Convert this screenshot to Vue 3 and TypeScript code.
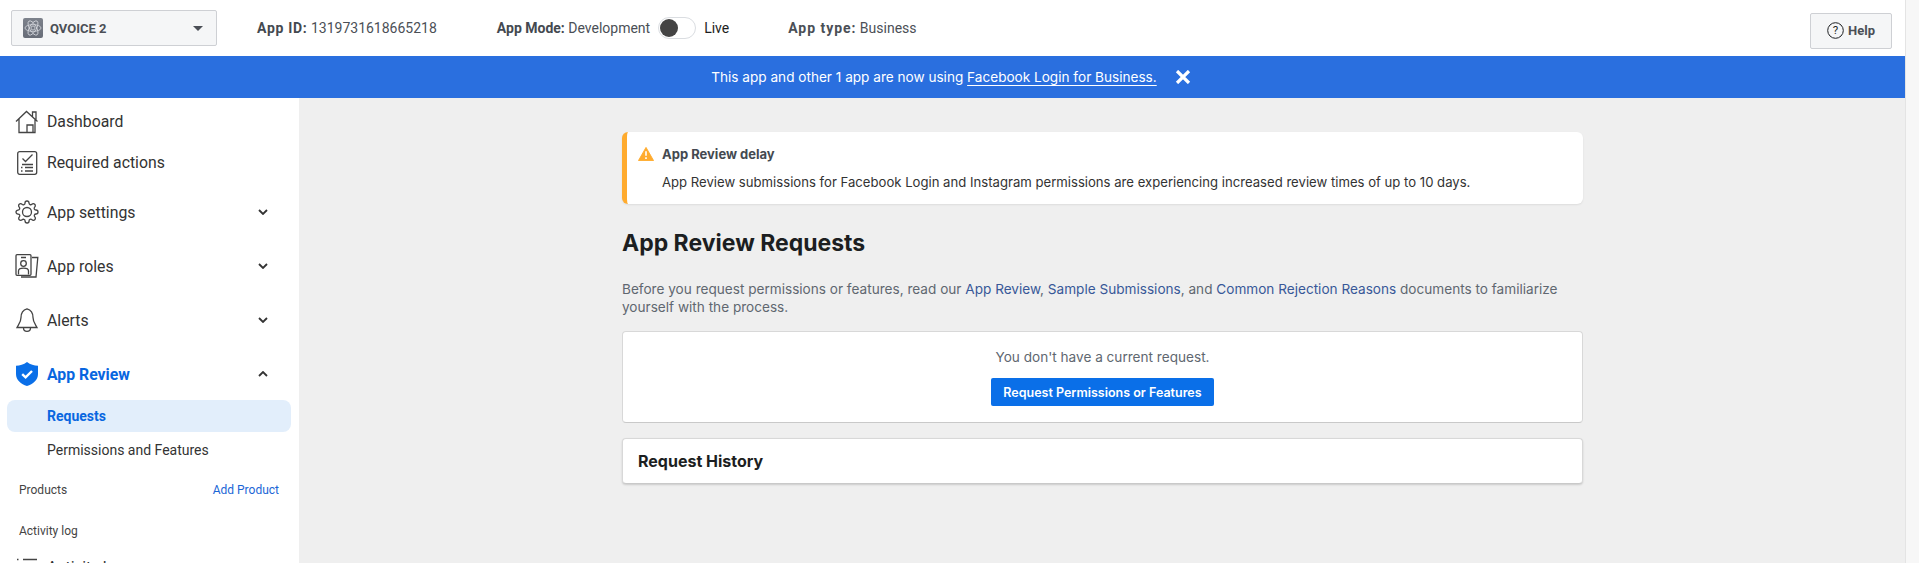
<script setup lang="ts">
const gear =
  "M19.4 15a1.65 1.65 0 0 0 .33 1.82l.06.06a2 2 0 0 1 0 2.83 2 2 0 0 1-2.83 0l-.06-.06a1.65 1.65 0 0 0-1.82-.33 1.65 1.65 0 0 0-1 1.51V21a2 2 0 0 1-2 2 2 2 0 0 1-2-2v-.09A1.65 1.65 0 0 0 9 19.4a1.65 1.65 0 0 0-1.82.33l-.06.06a2 2 0 0 1-2.83 0 2 2 0 0 1 0-2.83l.06-.06a1.65 1.65 0 0 0 .33-1.82 1.65 1.65 0 0 0-1.51-1H3a2 2 0 0 1-2-2 2 2 0 0 1 2-2h.09A1.65 1.65 0 0 0 4.6 9a1.65 1.65 0 0 0-.33-1.82l-.06-.06a2 2 0 0 1 0-2.83 2 2 0 0 1 2.83 0l.06.06a1.65 1.65 0 0 0 1.82.33H9a1.65 1.65 0 0 0 1-1.51V3a2 2 0 0 1 2-2 2 2 0 0 1 2 2v.09a1.65 1.65 0 0 0 1 1.51 1.65 1.65 0 0 0 1.82-.33l.06-.06a2 2 0 0 1 2.83 0 2 2 0 0 1 0 2.83l-.06.06a1.65 1.65 0 0 0-.33 1.82V9a1.65 1.65 0 0 0 1.51 1H21a2 2 0 0 1 2 2 2 2 0 0 1-2 2h-.09a1.65 1.65 0 0 0-1.51 1z";
</script>

<template>
  <div class="page">
    <div class="column">
      <header class="topbar">
        <div class="selector">
          <span class="app-icon">
            <svg viewBox="0 0 20 20" width="20" height="20">
              <g fill="none" stroke="#d5d8dd" stroke-width="0.8">
                <ellipse cx="10" cy="10" rx="8" ry="3.4" />
                <ellipse cx="10" cy="10" rx="8" ry="3.4" transform="rotate(60 10 10)" />
                <ellipse cx="10" cy="10" rx="8" ry="3.4" transform="rotate(120 10 10)" />
                <circle cx="10" cy="10" r="2" />
              </g>
            </svg>
          </span>
          <span class="app-name">QVOICE 2</span>
          <span class="caret"></span>
        </div>
        <div class="meta meta-id"><b>App ID:</b> 1319731618665218</div>
        <div class="meta meta-mode"><b>App Mode:</b> Development</div>
        <span class="toggle"><span class="knob"></span></span>
        <div class="meta meta-live">Live</div>
        <div class="meta meta-type"><b>App type:</b> Business</div>
        <button class="help">
          <svg viewBox="0 0 17 17" width="17" height="17">
            <circle cx="8.5" cy="8.5" r="7.8" fill="none" stroke="#1c1e21" stroke-width="1" />
            <text x="8.5" y="12.3" text-anchor="middle" class="help-q">?</text>
          </svg>
          <span>Help</span>
        </button>
      </header>

      <div class="banner">
        <span>This app and other 1 app are now using <a class="banner-link">Facebook Login for Business.</a></span>
        <svg viewBox="0 0 16 14" width="16" height="14">
          <path d="M2 1 14 13M14 1 2 13" stroke="#fff" stroke-width="3.2" fill="none" />
        </svg>
      </div>

      <div class="body">
        <aside class="sidebar">
          <div class="nav-row row-dashboard">
            <svg class="nav-icon" viewBox="0 0 24 24">
              <path d="M1 11.5 11.5 1.5 22.5 11.5M17.5 6.5V2H21V9.8M4 9V22.5H20V9M12 22.5V15H18V22.5" />
            </svg>
            <span>Dashboard</span>
          </div>
          <div class="nav-row row-short">
            <svg class="nav-icon" viewBox="0 0 24 24">
              <rect x="2.7" y="0.7" width="19" height="22.6" rx="2" />
              <path d="M7.5 7.5 10.5 10.5 17.5 3.5M7 13.5H18M10 16.5H18M10 20H18M6 16.5H7.5M6 20H7.5" />
            </svg>
            <span>Required actions</span>
          </div>
          <div class="nav-row row-first-group">
            <svg class="nav-icon" viewBox="0 0 24 24">
              <circle cx="12" cy="12" r="4.5" />
              <path :d="gear" />
            </svg>
            <span>App settings</span>
            <svg class="chev" viewBox="0 0 10 6"><path d="M1 1 5 5 9 1" /></svg>
          </div>
          <div class="nav-row">
            <svg class="nav-icon" viewBox="0 0 24 24">
              <rect x="1" y="0.7" width="15" height="20.6" rx="1" />
              <circle cx="8.5" cy="9.5" r="2.8" />
              <path d="M3.5 20.5V17C3.5 15 6 14.2 8.5 14.2S13.5 15 13.5 17V20.5M6 3.5H11M17 3.5H22.8L21 23H6" />
            </svg>
            <span>App roles</span>
            <svg class="chev" viewBox="0 0 10 6"><path d="M1 1 5 5 9 1" /></svg>
          </div>
          <div class="nav-row">
            <svg class="nav-icon" viewBox="0 0 24 24">
              <path d="M12 0.8C7.5 2 6 5.5 6 9.5 6 14 4 16 2 19.5H22C20 16 18 14 18 9.5 18 5.5 16.5 2 12 0.8ZM8.5 20C8.5 22.2 10 23.3 12 23.3S15.5 22.2 15.5 20" />
            </svg>
            <span>Alerts</span>
            <svg class="chev" viewBox="0 0 10 6"><path d="M1 1 5 5 9 1" /></svg>
          </div>
          <div class="nav-row row-active">
            <svg class="shield" viewBox="0 0 24 24">
              <path d="M12 0C8.5 2.6 5 3.6 1 3.8V12C1 18 6 22 12 24 18 22 23 18 23 12V3.8C19 3.6 15.5 2.6 12 0Z" fill="#0a6fe8" />
              <path d="M7.2 12.2 10.6 15.4 17 9" fill="none" stroke="#fff" stroke-width="2.4" />
            </svg>
            <span>App Review</span>
            <svg class="chev" viewBox="0 0 10 6"><path d="M1 5 5 1 9 5" /></svg>
          </div>
          <div class="sub-row sub-active">Requests</div>
          <div class="sub-row sub-plain">Permissions and Features</div>
          <div class="label-row label-products">
            <span>Products</span>
            <a class="add-product">Add Product</a>
          </div>
          <div class="label-row label-activity"><span>Activity log</span></div>
          <div class="nav-row row-tail">
            <svg class="nav-icon" viewBox="0 0 24 24">
              <path d="M2 1.5H3.5M8 1.5H22M2 8H3.5M8 8H22" />
            </svg>
            <span>Activity log</span>
          </div>
        </aside>

        <main class="main">
          <section class="alert">
            <div class="alert-title">
              <svg viewBox="0 0 16 14" width="16" height="14">
                <path d="M8 0 16 14H0Z" fill="#ffab2e" stroke="#ffab2e" stroke-linejoin="round" stroke-width="1" transform="matrix(.94 0 0 .94 .5 .4)" />
                <path d="M8 4.3V8.8M8 10.3V11.9" stroke="#fff" stroke-width="1.6" />
              </svg>
              <span>App Review delay</span>
            </div>
            <p class="alert-body">App Review submissions for Facebook Login and Instagram permissions are experiencing increased review times of up to 10 days.</p>
          </section>

          <h1 class="title">App Review Requests</h1>

          <p class="intro">
            Before you request permissions or features, read our
            <a>App Review</a>, <a>Sample Submissions</a>, and <a>Common Rejection Reasons</a>
            documents to familiarize yourself with the process.
          </p>

          <section class="card card-request">
            <div class="empty">You don't have a current request.</div>
            <button class="primary">Request Permissions or Features</button>
          </section>

          <section class="card card-history">Request History</section>
        </main>
      </div>
    </div>
    <div class="scrollbar"></div>
  </div>
</template>

<style>
html, body { margin: 0; overflow: hidden; }
</style>

<style scoped>
.page {
  display: flex;
  width: 1919px;
  height: 563px;
  overflow: hidden;
  font-family: Roboto, "Liberation Sans", sans-serif;
  color: #444950;
  background: #fff;
}
.column { width: 1905px; display: flex; flex-direction: column; }
.scrollbar { width: 13px; border-left: 1px solid #e4e4e4; background: #f7f7f7; }

.topbar { height: 56px; display: flex; align-items: center; padding-left: 11px; background: #fff; }
.selector {
  box-sizing: border-box;
  width: 206px;
  height: 36px;
  display: flex;
  align-items: center;
  padding: 0 13px 0 11px;
  background: #f5f6f7;
  border: 1px solid #ced0d4;
  border-radius: 2px;
}
.app-icon {
  width: 20px; height: 20px;
  background: linear-gradient(#7d828c, #686d78);
  border-radius: 2px;
  display: flex;
}
.app-name { margin-left: 7px; font-size: 13px; font-weight: 700; color: #4b4f56; flex: 1; }
.caret {
  width: 0; height: 0;
  border-left: 5px solid transparent;
  border-right: 5px solid transparent;
  border-top: 5px solid #4b4f56;
}
.meta { font-size: 14px; color: #4b4f56; white-space: nowrap; }
.meta b { font-weight: 700; color: #444950; }
.meta-id b { letter-spacing: 0.7px; }
.meta-id { margin-left: 40px; }
.meta-mode { margin-left: 60px; }
.meta-live { margin-left: 8px; color: #1c1e21; }
.meta-type { margin-left: 59px; }
.meta-type b { letter-spacing: 0.95px; color: #4b4f56; }
.toggle {
  box-sizing: border-box;
  margin-left: 8px;
  width: 38px; height: 22px;
  border: 1px solid #dadde1;
  border-radius: 11px;
  padding: 1px;
  display: flex;
  background: #fff;
}
.knob { width: 18px; height: 18px; border-radius: 50%; background: #444; }
.help {
  box-sizing: border-box;
  margin-left: auto;
  margin-right: 13px;
  margin-top: 5px;
  width: 82px; height: 36px;
  display: flex; align-items: center; justify-content: center; gap: 4px;
  background: #f5f6f7;
  border: 1px solid #ced0d4;
  border-radius: 2px;
  font: 700 13px Roboto, sans-serif;
  color: #4b4f56;
  padding: 0;
}
.help-q { font: 400 11.5px Roboto, sans-serif; fill: #1c1e21; }

.banner {
  box-sizing: border-box;
  height: 42px;
  display: flex; align-items: center; justify-content: center; gap: 18px;
  padding-right: 3px;
  background: #2a6fdf;
  color: #fff;
  font: 400 13.6px Inter, sans-serif;
  flex: none;
}
.banner-link { text-decoration: underline; text-underline-offset: 3px; }

.body { flex: 1; display: flex; min-height: 0; }
.sidebar { width: 299px; flex: none; background: #fff; overflow: hidden; padding-top: 3px; box-sizing: border-box; }
.nav-row {
  display: flex; align-items: center;
  height: 54px;
  padding: 0 31px 0 15px;
  font-size: 15.8px;
  color: #333;
}
.nav-row > span { margin-left: 8px; flex: 1; }
.row-dashboard, .row-short { height: 41px; }
.row-first-group { margin-top: 2px; }
.row-active { color: #0866e0; font-weight: 700; }
.row-tail { height: 36px; margin-top: 15px; align-items: flex-start; }
.nav-icon { width: 24px; height: 24px; fill: none; stroke: #444; stroke-width: 1.3; flex: none; }
.shield { width: 24px; height: 24px; flex: none; }
.chev { width: 10px; height: 6px; fill: none; stroke: #333; stroke-width: 1.8; flex: none; }
.sub-row { height: 32px; line-height: 32px; padding-left: 47px; font-size: 14px; color: #333; }
.sub-active {
  margin: -1px 8px 0 7px;
  padding-left: 40px;
  background: #e2eefb;
  border-radius: 8px;
  color: #0866e0;
  font-weight: 700;
}
.sub-plain { margin-top: 2px; }
.label-row {
  display: flex; justify-content: space-between;
  height: 24px; line-height: 24px;
  padding: 0 20px 0 19px;
  font-size: 12px;
  color: #444;
}
.label-products { margin-top: 12px; }
.label-activity { margin-top: 17px; }
.add-product { color: #1a66d6; }

.main {
  flex: 1;
  background: #efefef;
  padding: 34px 322px 0 323px;
  min-width: 0;
  font-family: Inter, sans-serif;
}
.alert {
  box-sizing: border-box;
  height: 72px;
  background: #fff;
  border-left: 5px solid #ffab2e;
  border-radius: 6px;
  box-shadow: 0 1px 2px rgba(0,0,0,.08);
  padding: 14px 0 0 11px;
}
.alert-title { display: flex; align-items: center; gap: 8px; font-size: 13px; font-weight: 700; color: #444950; height: 16px; }
.alert-body { margin: 12px 0 0 24px; font-size: 13.14px; line-height: 16px; color: #333; }
.title { margin: 23px 0 0; font-size: 23px; line-height: 32px; font-weight: 700; color: #1c1e21; }
.intro { margin: 21px 0 0; font-size: 13.6px; line-height: 18px; color: #606770; }
.intro a { color: #385898; }
.card {
  box-sizing: border-box;
  background: #fff;
  border: 1px solid #d8d8d8;
  border-bottom-color: #c9c9c9;
  border-radius: 4px;
}
.card-request {
  margin-top: 15px;
  height: 92px;
  display: flex; flex-direction: column; align-items: center;
  padding-top: 17px;
}
.empty { font-size: 13.6px; line-height: 16px; color: #606770; }
.primary {
  margin-top: 13px;
  width: 223px; height: 28px;
  background: #0a6fe8;
  border: 0;
  border-radius: 2px;
  color: #fff;
  font: 600 12.5px Inter, sans-serif;
  padding: 0;
}
.card-history {
  margin-top: 15px;
  height: 46px;
  display: flex; align-items: center;
  padding-left: 15px;
  font-size: 16px; font-weight: 700; color: #1c1e21;
  box-shadow: 0 1px 2px rgba(0,0,0,.15);
}
</style>
